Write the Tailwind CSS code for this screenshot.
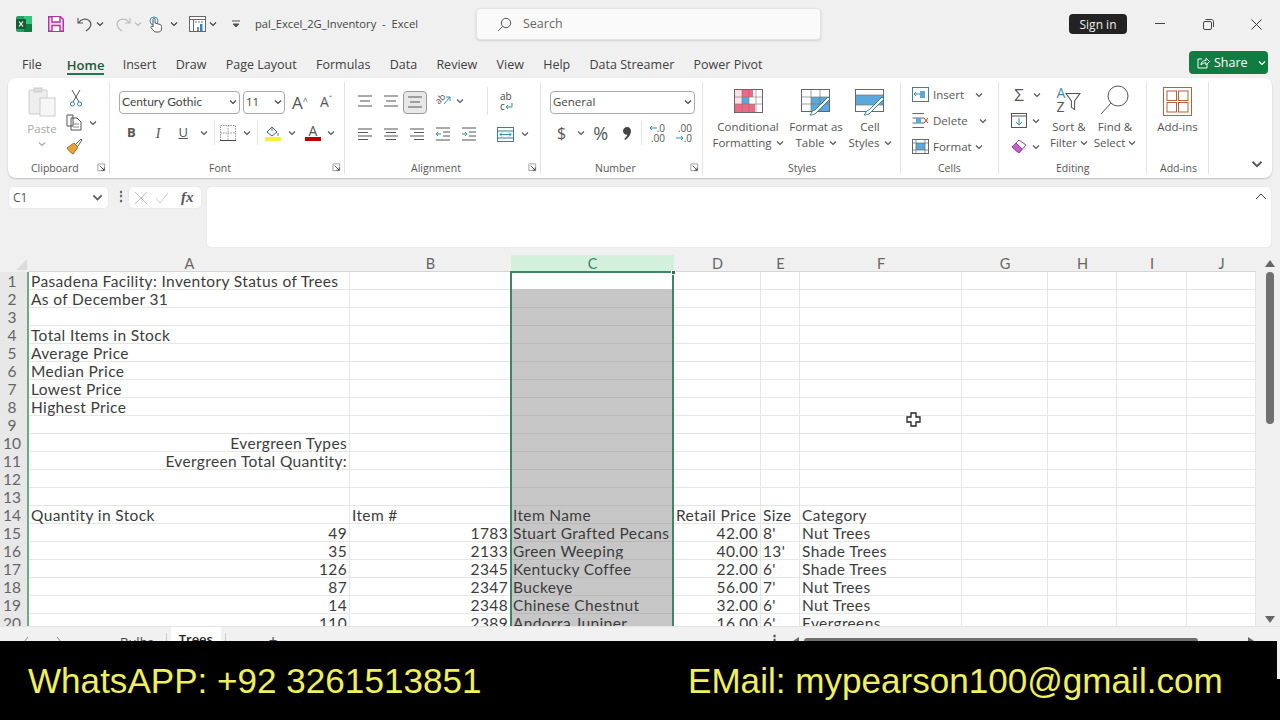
<!DOCTYPE html>
<html lang="en">
  <head>
    <meta charset="UTF-8" />
    <title>pal_Excel_2G_Inventory - Excel</title>
    <script src="https://cdn.jsdelivr.net/npm/@tailwindcss/browser@4"></script>
  </head>
  <body class="bg-[#f0f0f0]">
    <svg class="hidden">
      <symbol id="chev" viewBox="0 0 8 8"><path d="M1 2.5 4 5.5 7 2.5" fill="none" stroke="currentColor" stroke-width="1.2"/></symbol>
      <symbol id="launch" viewBox="0 0 10 10"><path d="M1 1H8.5V8.5H1V1ZM1 1" fill="none" stroke="#999" stroke-width="1"/><path d="M3 3 8 8M8 5V8H5" fill="none" stroke="#444" stroke-width="1"/></symbol>
      <symbol id="lines-center" viewBox="0 0 16 16"><path d="M1 3H15M3 8H13M1 13H15" fill="none" stroke="#555" stroke-width="1.2"/></symbol>
      <symbol id="lines-left" viewBox="0 0 16 16"><path d="M1 3H15M1 6.5H11M1 10H15M1 13.5H11" fill="none" stroke="#555" stroke-width="1.1"/></symbol>
      <symbol id="lines-mid" viewBox="0 0 16 16"><path d="M1 3H15M3 6.5H13M1 10H15M3 13.5H13" fill="none" stroke="#555" stroke-width="1.1"/></symbol>
      <symbol id="lines-right" viewBox="0 0 16 16"><path d="M1 3H15M5 6.5H15M1 10H15M5 13.5H15" fill="none" stroke="#555" stroke-width="1.1"/></symbol>
    </svg>

    <div class="w-[1280px] h-[720px] overflow-hidden flex flex-col text-[#404040] font-['Open_Sans',sans-serif]">
      <!-- title bar -->
      <div class="h-[48px] shrink-0 flex items-center text-[#444]">
        <svg class="ml-[16px] w-[16px] h-[16px]" viewBox="0 0 16 16"><rect width="16" height="16" rx="2" fill="#21a366"/><rect x="8" width="8" height="8" fill="#33c481"/><rect x="8" y="8" width="8" height="8" fill="#107c41"/><rect x="0" y="3" width="10" height="10" rx="1" fill="#185c37"/><path d="M3 5.5 7 10.5M7 5.5 3 10.5" stroke="#fff" stroke-width="1.2"/></svg>
        <svg class="ml-[16px] w-[16px] h-[16px]" viewBox="0 0 16 16"><path d="M.7.7H12.5L15.3 3.5V15.3H.7Z" fill="#f3d6ef" stroke="#b5319f" stroke-width="1.4"/><path d="M4 1V6H12V1M4 15V9.5H12V15" fill="#fff" stroke="#b5319f" stroke-width="1.4"/></svg>
        <svg class="ml-[13px] w-[16px] h-[16px]" viewBox="0 0 16 16"><path d="M1 2V7H6M1.5 7C4 3 9 2 12 4.5 15.5 7.500 14 12 9 15" fill="none" stroke="#555" stroke-width="1.1"/></svg>
        <svg class="ml-[3px] w-[8px] h-[8px]"><use href="#chev"/></svg>
        <svg class="ml-[11px] w-[16px] h-[16px]" viewBox="0 0 16 16"><path d="M15 2V7H10M14.500 7C12 3 7 2 4 4.5 .5 7.500 2 12 7 15" fill="none" stroke="#bbb" stroke-width="1.1"/></svg>
        <svg class="ml-[3px] w-[8px] h-[8px] text-[#bbb]"><use href="#chev"/></svg>
        <svg class="ml-[7px] w-[14px] h-[17px]" viewBox="0 0 14 17"><circle cx="5" cy="5" r="4" fill="none" stroke="#3b8fb0" stroke-width="1"/><path d="M4 11V3.500C4 2 6 2 6 3.500V7L11 8.500C12.500 9 12.500 10 12.500 11.500V13C12.500 15 11 16 9 16H7C5 16 4 14 2 11.500 1.500 10.500 3 9.500 4 11Z" fill="#fff" stroke="#555" stroke-width="1"/></svg>
        <svg class="ml-[7px] w-[8px] h-[8px]"><use href="#chev"/></svg>
        <svg class="ml-[11px] w-[17px] h-[16px]" viewBox="0 0 17 16"><rect x=".5" y=".5" width="16" height="15" fill="#fff" stroke="#666"/><path d="M.5 3.500H16.500M4.500 3.500V15.500" stroke="#666"/><path d="M6 6H15" stroke="#bbb" stroke-width="2" stroke-dasharray="2 1"/><rect x="8" y="11" width="2" height="4" fill="#888"/><rect x="11" y="8" width="2.500" height="7" fill="#2b88c8"/></svg>
        <svg class="ml-[3px] w-[8px] h-[8px]"><use href="#chev"/></svg>
        <svg class="ml-[14px] w-[10px] h-[10px]" viewBox="0 0 10 10"><path d="M1 2H9M2 5 5 8 8 5Z" fill="#555" stroke="#555"/></svg>
        <span class="ml-[14px] w-[165px] pt-[1px] text-[11.2px] whitespace-pre">pal_Excel_2G_Inventory  -  Excel</span>
        <div class="ml-[56px] w-[345px] h-[32px] bg-[#fafafa] rounded border border-[#e2e2e2] shadow-sm flex items-center text-[12.500px] text-[#666]">
          <svg class="ml-[20px] w-[15px] h-[15px]" viewBox="0 0 15 15"><circle cx="9" cy="6" r="4.700" fill="none" stroke="#555"/><path d="M5.500 9.500 1 14" stroke="#555"/></svg>
          <span class="ml-[11px] pt-[1px]">Search</span>
        </div>
        <div class="ml-[248px] w-[58px] h-[20px] bg-[#222] rounded-sm text-[#eee] text-[12px] pt-[1px] flex items-center justify-center">Sign in</div>
        <svg class="ml-[28px] w-[10px] h-[10px]" viewBox="0 0 10 10"><path d="M0 4.500H10" stroke="#444"/></svg>
        <svg class="ml-[38px] w-[11px] h-[11px]" viewBox="0 0 11 11"><rect x=".5" y="2.500" width="8" height="8" rx="1.500" fill="none" stroke="#444"/><path d="M2.500 .5H8.500C9.500 .5 10.500 1.500 10.500 2.500V8" fill="none" stroke="#444"/></svg>
        <svg class="ml-[37px] w-[11px] h-[11px]" viewBox="0 0 11 11"><path d="M.5 .5 10.500 10.500M10.500 .5 .5 10.500" stroke="#333"/></svg>
      </div>

      <!-- ribbon tabs -->
      <div class="h-[30px] shrink-0 flex items-start pl-[22px] text-[12.500px] gap-[19.300px]">
        <span class="mt-[7px] leading-[20px] mr-[5.700px]">File</span>
        <span class="mt-[7px] leading-[20px] text-[13px] font-semibold text-[#185c37] border-b-2 border-[#1e7a4c] h-[20px] -mr-[1px]">Home</span>
        <span class="mt-[7px] leading-[20px]">Insert</span>
        <span class="mt-[7px] leading-[20px]">Draw</span>
        <span class="mt-[7px] leading-[20px]">Page Layout</span>
        <span class="mt-[7px] leading-[20px]">Formulas</span>
        <span class="mt-[7px] leading-[20px]">Data</span>
        <span class="mt-[7px] leading-[20px]">Review</span>
        <span class="mt-[7px] leading-[20px]">View</span>
        <span class="mt-[7px] leading-[20px]">Help</span>
        <span class="mt-[7px] leading-[20px]">Data Streamer</span>
        <span class="mt-[7px] leading-[20px]">Power Pivot</span>
        <div class="ml-auto mr-[12px] mt-[3px] w-[79px] h-[23px] bg-[#107c41] rounded text-white text-[12.500px] flex items-center">
          <svg class="ml-[8px] w-[13px] h-[13px]" viewBox="0 0 13 13"><path d="M5 3H1V12H10V8M4 9C4 6 6 4.500 9 4.500V2L12.500 5.500 9 9V6.800C7 6.800 5.500 7.500 4 9Z" fill="none" stroke="#fff"/></svg>
          <span class="ml-[4px] pt-[1px]">Share</span>
          <svg class="ml-[10px] w-[8px] h-[8px]"><use href="#chev"/></svg>
        </div>
      </div>

      <!-- ribbon -->
      <div class="relative mx-[8px] h-[100px] shrink-0 bg-white rounded-lg shadow-[0_1px_2px_rgba(0,0,0,0.2)] flex text-[11.500px] text-[#555]">
        <!-- clipboard -->
        <div class="relative w-[102px] border-r border-[#e3e3e3] my-[4px]">
          <div class="flex pl-[20px] pt-[5px]">
            <div class="w-[28px] flex flex-col items-center">
              <svg class="w-[28px] h-[30px]" viewBox="0 0 28 30"><rect x="1" y="3" width="18" height="24" rx="1" fill="#eee" stroke="#ccc"/><rect x="6" y="1" width="8" height="4" fill="#ddd" stroke="#ccc"/><rect x="12" y="11" width="15" height="18" fill="#f6f6f6" stroke="#ccc"/></svg>
              <span class="mt-[3px] text-[#aaa]">Paste</span>
              <svg class="mt-[3px] w-[8px] h-[8px] text-[#aaa]"><use href="#chev"/></svg>
            </div>
            <div class="ml-[10px] flex flex-col">
              <svg class="w-[14px] h-[18px] ml-[3px] mt-[2px]" viewBox="0 0 14 18"><path d="M3 1 10 13M11 1 4 13" stroke="#555"/><circle cx="3.500" cy="15" r="2" fill="none" stroke="#2f8fa8"/><circle cx="10.500" cy="15" r="2" fill="none" stroke="#2f8fa8"/></svg>
              <div class="flex items-center mt-[7px]">
                <svg class="w-[17px] h-[17px]" viewBox="0 0 17 17"><path d="M1 1H7V12H1ZM5 4H11L15 8V16H5Z" fill="#fff" stroke="#555"/><path d="M7 10H13M7 13H13" stroke="#888"/></svg>
                <svg class="ml-[6px] w-[8px] h-[8px]"><use href="#chev"/></svg>
              </div>
              <svg class="w-[17px] h-[17px] mt-[7px]" viewBox="0 0 17 17"><path d="M1 10 8 5 12 9 7 16C5 15 3 13 1 10Z" fill="#e8a33d" stroke="#a86b1a"/><path d="M10 6 15 1 16 2 12 8" fill="#fff" stroke="#555"/></svg>
            </div>
          </div>
          <span class="absolute left-[23px] top-[77px] leading-[18px] text-[10.500px]">Clipboard</span>
          <svg class="absolute right-[3px] top-[81px] w-[9px] h-[9px]"><use href="#launch"/></svg>
        </div>
        <!-- font -->
        <div class="relative w-[235px] border-r border-[#e3e3e3] my-[4px] pl-[9px]">
          <div class="flex items-center pt-[9px] h-[31px]">
            <div class="w-[121px] h-[23px] border border-[#aaa] rounded flex items-center pl-[2px] text-[#444]"><span class="font-['Lato',sans-serif] text-[12px]">Century Gothic</span><svg class="ml-auto mr-[2px] w-[8px] h-[8px]"><use href="#chev"/></svg></div>
            <div class="ml-[3px] w-[42px] h-[23px] border border-[#aaa] rounded flex items-center pl-[2px] text-[#444]"><span>11</span><svg class="ml-auto mr-[2px] w-[8px] h-[8px]"><use href="#chev"/></svg></div>
            <span class="ml-[7px] text-[17px] leading-none">A<sup class="text-[9px]">^</sup></span>
            <span class="ml-[12px] text-[14px] leading-none">A<sup class="text-[9px]">ˇ</sup></span>
          </div>
          <div class="flex items-center mt-[9px] h-[22px] text-[13px]">
            <span class="ml-[8px] font-bold">B</span>
            <span class="ml-[20px] italic font-['Liberation_Serif',serif] text-[14px]">I</span>
            <span class="ml-[18px] underline">U</span>
            <svg class="ml-[12px] w-[8px] h-[8px]"><use href="#chev"/></svg>
            <div class="ml-[6px] w-px h-[24px] bg-[#e3e3e3]"></div>
            <svg class="ml-[5px] w-[16px] h-[16px]" viewBox="0 0 16 16"><path d="M.5 .5H15.500V15.500H.5ZM.5 8H15.500M8 .5V15.500" fill="none" stroke="#999" stroke-dasharray="1.500 1"/><path d="M0 15.500H16" stroke="#444"/></svg>
            <svg class="ml-[7px] w-[8px] h-[8px]"><use href="#chev"/></svg>
            <div class="ml-[6px] w-px h-[24px] bg-[#e3e3e3]"></div>
            <div class="ml-[7px] w-[16px] flex flex-col items-center"><svg class="w-[14px] h-[11px]" viewBox="0 0 14 11"><path d="M1 6 6 1 11 6 6 10Z" fill="#fff" stroke="#555"/><path d="M6 1V5M12 7V10" stroke="#2f8fa8"/></svg><div class="w-[16px] h-[4px] bg-[#f5f03a]"></div></div>
            <svg class="ml-[7px] w-[8px] h-[8px]"><use href="#chev"/></svg>
            <div class="ml-[9px] w-[16px] flex flex-col items-center leading-[12px]"><span class="text-[14px]">A</span><div class="w-[16px] h-[4px] bg-[#c00000]"></div></div>
            <svg class="ml-[6px] w-[8px] h-[8px]"><use href="#chev"/></svg>
          </div>
          <span class="absolute left-[99px] top-[77px] leading-[18px] text-[10.500px]">Font</span>
          <svg class="absolute right-[3px] top-[81px] w-[9px] h-[9px]"><use href="#launch"/></svg>
        </div>
        <!-- alignment -->
        <div class="relative w-[196px] border-r border-[#e3e3e3] my-[4px] pl-[12px]">
          <div class="flex items-center pt-[6px] h-[31px]">
            <svg class="w-[16px] h-[16px]"><use href="#lines-center"/></svg>
            <svg class="ml-[10px] w-[16px] h-[16px]"><use href="#lines-center"/></svg>
            <div class="ml-[4px] mt-[3px] w-[24px] h-[23px] bg-[#e8e8e8] border border-[#999] rounded flex items-center justify-center"><svg class="w-[16px] h-[16px]"><use href="#lines-center"/></svg></div>
            <div class="ml-[8px] w-[16px] h-[16px] relative"><span class="absolute left-0 top-0 text-[9px] leading-[12px] -rotate-45">ab</span><svg class="absolute left-0 top-0 w-[16px] h-[16px]" viewBox="0 0 16 16"><path d="M9 11 15 4M11 4H15V8" fill="none" stroke="#2f8fa8"/></svg></div>
            <svg class="ml-[5px] w-[8px] h-[8px]"><use href="#chev"/></svg>
            <div class="ml-[23px] w-px h-[28px] bg-[#e3e3e3]"></div>
            <div class="ml-[12px] flex flex-col text-[10px] leading-[10px] text-[#444]"><span>ab</span><span class="flex items-center">c<svg class="w-[8px] h-[8px]" viewBox="0 0 8 8"><path d="M7 1V5H1M3 3 1 5 3 7" fill="none" stroke="#2f8fa8"/></svg></span></div>
          </div>
          <div class="flex items-center mt-[10px] h-[22px]">
            <svg class="w-[16px] h-[16px]"><use href="#lines-left"/></svg>
            <svg class="ml-[10px] w-[16px] h-[16px]"><use href="#lines-mid"/></svg>
            <svg class="ml-[10px] w-[16px] h-[16px]"><use href="#lines-right"/></svg>
            <svg class="ml-[10px] w-[16px] h-[16px]" viewBox="0 0 16 16"><path d="M1 2H15M8 6H15M8 10H15M1 14H15" stroke="#555"/><path d="M6 8H1M3 6 1 8 3 10" fill="none" stroke="#2f8fa8"/></svg>
            <svg class="ml-[10px] w-[16px] h-[16px]" viewBox="0 0 16 16"><path d="M1 2H15M8 6H15M8 10H15M1 14H15" stroke="#555"/><path d="M1 8H6M4 6 6 8 4 10" fill="none" stroke="#2f8fa8"/></svg>
            <svg class="ml-[20px] w-[17px] h-[15px]" viewBox="0 0 17 15"><rect x=".5" y=".5" width="16" height="14" fill="#fff" stroke="#3b7f90"/><path d="M.5 4H16.500M.5 11H16.500" stroke="#3b7f90"/><path d="M3 7.500H14M5 5.500 3 7.500 5 9.500M12 5.500 14 7.500 12 9.500" fill="none" stroke="#2f8fa8"/></svg>
            <svg class="ml-[7px] w-[8px] h-[8px]"><use href="#chev"/></svg>
          </div>
          <span class="absolute left-[66px] top-[77px] leading-[18px] text-[10.500px]">Alignment</span>
          <svg class="absolute right-[3px] top-[81px] w-[9px] h-[9px]"><use href="#launch"/></svg>
        </div>
        <!-- number -->
        <div class="relative w-[162px] border-r border-[#e3e3e3] my-[4px] pl-[9px]">
          <div class="flex items-center pt-[9px] h-[31px]">
            <div class="w-[145px] h-[23px] border border-[#aaa] rounded flex items-center pl-[2px] text-[#444]"><span>General</span><svg class="ml-auto mr-[2px] w-[8px] h-[8px]"><use href="#chev"/></svg></div>
          </div>
          <div class="flex items-center mt-[9px] h-[22px]">
            <span class="ml-[7px] text-[16px]">$</span>
            <svg class="ml-[11px] w-[8px] h-[8px]"><use href="#chev"/></svg>
            <span class="ml-[8px] text-[18px] leading-none">%</span>
            <svg class="ml-[15px] w-[8px] h-[13px]" viewBox="0 0 8 13"><path d="M4 0C6.500 0 8 1.800 8 4 8 7.500 5.500 11 2 13L1.300 12C3 10.500 4 9.300 4.300 7.800 2 8 0 6.300 0 4 0 1.800 1.800 0 4 0Z" fill="#444"/></svg>
            <div class="ml-[10px] w-px h-[24px] bg-[#e3e3e3]"></div>
            <div class="ml-[5px] w-[18px] text-[10px] leading-[10px] text-right"><div class="flex items-center justify-end"><svg class="w-[8px] h-[6px]" viewBox="0 0 8 6"><path d="M8 3H1M3 1 1 3 3 5" fill="none" stroke="#2f8fa8"/></svg>.0</div><div>.00</div></div>
            <div class="ml-[9px] w-[18px] text-[10px] leading-[10px] text-right"><div>.00</div><div class="flex items-center justify-end"><svg class="w-[8px] h-[6px]" viewBox="0 0 8 6"><path d="M0 3H7M5 1 7 3 5 5" fill="none" stroke="#2f8fa8"/></svg>.0</div></div>
          </div>
          <span class="absolute left-[54px] top-[77px] leading-[18px] text-[10.500px]">Number</span>
          <svg class="absolute right-[3px] top-[81px] w-[9px] h-[9px]"><use href="#launch"/></svg>
        </div>
        <!-- styles -->
        <div class="relative w-[198px] border-r border-[#e3e3e3] my-[4px]">
          <div class="flex pt-[7px]">
            <div class="w-[90px] flex flex-col items-center">
              <svg class="w-[29px] h-[24px]" viewBox="0 0 29 24"><rect x=".5" y=".5" width="28" height="23" fill="#fff" stroke="#666"/><rect x="8" y="1" width="11" height="7" fill="#ee6a84"/><rect x="8" y="8" width="7" height="7" fill="#5aa9dc"/><rect x="1" y="15" width="20" height="8" fill="#ee6a84"/><rect x="1" y="1" width="7" height="14" fill="#ee6a84" opacity=".2"/><path d="M.5 8H28.500M.5 15H28.500M8 .5V23.500M15 .5V23.500M22 .5V23.500" stroke="#777" stroke-width=".6"/></svg>
              <span class="mt-[6px] leading-[16px]">Conditional</span>
              <span class="leading-[16px] flex items-center">Formatting<svg class="ml-[4px] w-[8px] h-[8px]"><use href="#chev"/></svg></span>
            </div>
            <div class="w-[60px] ml-[-7px] flex flex-col items-center">
              <svg class="w-[30px] h-[28px]" viewBox="0 0 30 28"><rect x=".5" y=".5" width="28" height="22" fill="#fff" stroke="#666"/><rect x="10" y="8" width="18" height="14" fill="#5aa9dc"/><path d="M.5 8H28.500M.5 15H28.500M10 .5V22.500M19 .5V22.500" stroke="#777" stroke-width=".7"/><path d="M14 25C12 26 9 26 9 26 11 24 11 21 14 21L27 8 29 10Z" fill="#fff" stroke="#3b7f90"/></svg>
              <span class="mt-[2px] leading-[16px]">Format as</span>
              <span class="leading-[16px] flex items-center">Table<svg class="ml-[4px] w-[8px] h-[8px]"><use href="#chev"/></svg></span>
            </div>
            <div class="w-[46px] ml-[1px] flex flex-col items-center">
              <svg class="w-[30px] h-[28px]" viewBox="0 0 30 28"><rect x=".5" y=".5" width="28" height="22" fill="#fff" stroke="#666"/><rect x="1" y="6" width="27" height="10" fill="#5aa9dc"/><path d="M.5 6H28.500M.5 16H28.500" stroke="#777" stroke-width=".7"/><path d="M14 25C12 26 9 26 9 26 11 24 11 21 14 21L27 8 29 10Z" fill="#fff" stroke="#3b7f90"/></svg>
              <span class="mt-[2px] leading-[16px]">Cell</span>
              <span class="leading-[16px] flex items-center whitespace-nowrap">Styles<svg class="ml-[4px] w-[8px] h-[8px]"><use href="#chev"/></svg></span>
            </div>
          </div>
          <span class="absolute left-[85px] top-[77px] leading-[18px] text-[10.500px]">Styles</span>
        </div>
        <!-- cells -->
        <div class="relative w-[98px] border-r border-[#e3e3e3] my-[4px] pl-[11px]">
          <div class="flex items-center h-[17px] mt-[4px]">
            <svg class="w-[17px] h-[15px]" viewBox="0 0 17 15"><rect x=".5" y=".5" width="16" height="14" fill="#fff" stroke="#3b7f90"/><rect x="8" y="4" width="5" height="7" fill="#5aa9dc"/><path d="M8 7H2M4 5 2 7 4 9" fill="none" stroke="#2f8fa8"/></svg>
            <span class="ml-[4px]">Insert</span><svg class="ml-[11px] w-[8px] h-[8px]"><use href="#chev"/></svg>
          </div>
          <div class="flex items-center h-[17px] mt-[9px]">
            <svg class="w-[17px] h-[15px]" viewBox="0 0 17 15"><path d="M.5 .5H12M.5 14.500H12M.5 5H12M.5 10H12" stroke="#666"/><rect x="4" y="5" width="5" height="5" fill="#5aa9dc"/><path d="M12 5 16 10M16 5 12 10" stroke="#d22"/></svg>
            <span class="ml-[4px]">Delete</span><svg class="ml-[11px] w-[8px] h-[8px]"><use href="#chev"/></svg>
          </div>
          <div class="flex items-center h-[17px] mt-[9px]">
            <svg class="w-[17px] h-[15px]" viewBox="0 0 17 15"><rect x=".5" y=".5" width="16" height="14" fill="#fff" stroke="#666"/><rect x="4" y="4" width="9" height="7" fill="#5aa9dc"/><path d="M4 .5V14.500M13 .5V14.500M.5 4H16.500M.5 11H16.500" stroke="#666" stroke-width=".7"/></svg>
            <span class="ml-[4px]">Format</span><svg class="ml-[3px] w-[8px] h-[8px]"><use href="#chev"/></svg>
          </div>
          <span class="absolute left-[37px] top-[77px] leading-[18px] text-[10.500px]">Cells</span>
        </div>
        <!-- editing -->
        <div class="relative w-[148px] border-r border-[#e3e3e3] my-[4px] flex">
          <div class="ml-[12px] w-[34px] flex flex-col">
            <div class="flex items-center h-[17px] mt-[4px]"><span class="w-[16px] text-center text-[17px] leading-none">Σ</span><svg class="ml-[6px] w-[8px] h-[8px]"><use href="#chev"/></svg></div>
            <div class="flex items-center h-[17px] mt-[9px]"><svg class="w-[16px] h-[15px]" viewBox="0 0 16 15"><rect x=".5" y=".5" width="15" height="14" fill="#fff" stroke="#555"/><path d="M.5 3H15.500" stroke="#555"/><path d="M8 5V12M5 9 8 12 11 9" fill="none" stroke="#2f8fa8"/></svg><svg class="ml-[5px] w-[8px] h-[8px]"><use href="#chev"/></svg></div>
            <div class="flex items-center h-[17px] mt-[9px]"><svg class="w-[16px] h-[15px]" viewBox="0 0 16 15"><path d="M1 8 8 1 15 6 8 14Z" fill="#fff" stroke="#9a3f9a"/><path d="M1 8 5 4 11 10 8 14Z" fill="#c95fc9" stroke="#9a3f9a"/></svg><svg class="ml-[5px] w-[8px] h-[8px]"><use href="#chev"/></svg></div>
          </div>
          <div class="ml-[-1px] w-[50px] flex flex-col items-center pt-[3px]">
            <div class="h-[29px] flex items-end"><div class="flex flex-col text-[14px] leading-[14px]"><span class="text-[#3b8fa8]">A</span><span>Z</span></div><svg class="w-[16px] h-[20px] mb-[2px]" viewBox="0 0 15 18"><path d="M1 1H14L9 8V16L6 14V8Z" fill="#fff" stroke="#555"/></svg></div>
            <span class="mt-[5px] leading-[16px]">Sort &amp;</span>
            <span class="leading-[16px] flex items-center">Filter<svg class="ml-[3px] w-[8px] h-[8px]"><use href="#chev"/></svg></span>
          </div>
          <div class="ml-[-3px] w-[48px] flex flex-col items-center pt-[3px]">
            <svg class="w-[30px] h-[30px]" viewBox="0 0 30 30"><circle cx="18" cy="11" r="10" fill="#fff" stroke="#555"/><path d="M11 18 1 29" stroke="#555"/></svg>
            <span class="mt-[4px] leading-[16px]">Find &amp;</span>
            <span class="leading-[16px] flex items-center">Select<svg class="ml-[3px] w-[8px] h-[8px]"><use href="#chev"/></svg></span>
          </div>
          <span class="absolute left-[57px] top-[77px] leading-[18px] text-[10.500px]">Editing</span>
        </div>
        <!-- add-ins -->
        <div class="relative w-[62px] border-r border-[#e3e3e3] my-[4px] flex flex-col items-center pt-[5px]">
          <svg class="w-[29px] h-[29px]" viewBox="0 0 29 29"><rect x=".5" y=".5" width="28" height="28" fill="#fff" stroke="#b5613c"/><rect x="4" y="4" width="9.500" height="9.500" fill="none" stroke="#b5613c"/><rect x="15.500" y="4" width="9.500" height="9.500" fill="none" stroke="#b5613c"/><rect x="4" y="15.500" width="9.500" height="9.500" fill="none" stroke="#b5613c"/><rect x="15.500" y="15.500" width="9.500" height="9.500" fill="none" stroke="#b5613c"/></svg>
          <span class="mt-[3px] leading-[16px]">Add-ins</span>
          <span class="absolute left-[13px] top-[77px] leading-[18px] text-[10.500px]">Add-ins</span>
        </div>
        <svg class="absolute right-[9px] top-[80px] w-[12px] h-[12px]"><use href="#chev"/></svg>
      </div>

      <!-- formula bar -->
      <div class="h-[61px] shrink-0 mt-[9px] flex items-start text-[12px] text-[#555]">
        <div class="ml-[9px] w-[99px] h-[21px] bg-white rounded shadow-[0_0_1px_rgba(0,0,0,0.2)] flex items-center pl-[4px]"><span>C1</span><svg class="ml-auto mr-[5px] w-[11px] h-[11px]"><use href="#chev"/></svg></div>
        <span class="ml-[7px] w-[4px] leading-[18px] font-bold">⋮</span>
        <div class="ml-[10px] w-[72px] h-[21px] bg-white rounded shadow-[0_0_1px_rgba(0,0,0,0.2)] flex items-center pl-[6px]">
          <svg class="w-[12px] h-[12px]" viewBox="0 0 12 12"><path d="M0 0 12 12M12 0 0 12" stroke="#bbb"/></svg>
          <svg class="ml-[8px] w-[14px] h-[12px]" viewBox="0 0 14 12"><path d="M1 6 5 11 13 1" fill="none" stroke="#ccc"/></svg>
          <span class="ml-[12px] font-['Liberation_Serif',serif] italic font-bold text-[15px] leading-none">fx</span>
        </div>
        <div class="relative ml-[6px] w-[1064px] h-[60px] bg-white rounded shadow-[0_0_1px_rgba(0,0,0,0.2)]">
          <svg class="absolute right-[4px] top-[4px] w-[12px] h-[12px]" viewBox="0 0 12 12"><path d="M1 8 6 3 11 8" fill="none" stroke="#444"/></svg>
        </div>
      </div>

      <!-- sheet -->
      <div class="h-[371px] shrink-0 mt-[7px] relative overflow-hidden flex font-['Lato',sans-serif]">
        <div class="w-[1258px] h-[371px] overflow-hidden">
          <div id="sheet" class="grid grid-cols-[29px_321px_161px_163px_87px_39px_162px_86px_69px_70px_69px] grid-rows-[17px] auto-rows-[18px] text-[15.500px] tracking-[0.36px] text-[#3c3c3c]"></div>
        </div>
        <div class="w-[22px] flex flex-col items-center pl-[2px]">
          <svg class="mt-[5px] w-[10px] h-[7px]" viewBox="0 0 10 7"><path d="M5 0 10 7H0Z" fill="#666"/></svg>
          <div class="mt-[5px] w-[8px] h-[152px] bg-[#707070] rounded-full"></div>
          <svg class="mt-auto mb-[3px] w-[10px] h-[7px]" viewBox="0 0 10 7"><path d="M5 7 10 0H0Z" fill="#666"/></svg>
        </div>
        <!-- selected column outline and mouse pointer -->
        <div class="absolute left-[510px] top-[16px] w-[164px] h-[360px] border-2 border-[#3f8465] border-b-0"></div>
        <div class="absolute left-[671px] top-[15px] w-[5px] h-[5px] bg-[#2f6f52] border border-white"></div>
        <svg class="absolute left-[906px] top-[157px] w-[15px] h-[15px]" viewBox="0 0 15 15"><path d="M5 1H10V5H14V10H10V14H5V10H1V5H5Z" fill="#fff" stroke="#222" stroke-width="1.300"/></svg>
      </div>

      <!-- sheet tabs, cut off by the banner -->
      <div class="h-[15px] shrink-0 overflow-hidden bg-[#f1f1f1] text-[13px] text-[#444] border-t border-[#e2e2e2] flex">
        <div class="w-[768px] shrink-0 flex">
          <svg class="ml-[23px] mt-[9px] w-[6px] h-[12px]" viewBox="0 0 6 12"><path d="M5 1 1 6 5 11" fill="none" stroke="#888"/></svg>
          <svg class="ml-[27px] mt-[9px] w-[6px] h-[12px]" viewBox="0 0 6 12"><path d="M1 1 5 6 1 11" fill="none" stroke="#888"/></svg>
          <span class="ml-[58px] mt-[5px] leading-[20px]">Bulbs</span>
          <div class="ml-[12px] w-px bg-[#ccc] mt-[6px]"></div>
          <div class="ml-[4px] w-[50px] bg-white text-center font-semibold text-[#222] leading-[20px] pt-[2px]">Trees</div>
          <div class="ml-[4px] w-px bg-[#ccc] mt-[6px]"></div>
          <span class="ml-[43px] mt-[3px] leading-[20px] text-[15px]">+</span>
        </div>
        <span class="w-[6px] mt-[2px] leading-[20px] font-bold">⋮</span>
        <svg class="ml-[19px] mt-[10px] w-[6px] h-[8px]" viewBox="0 0 6 8"><path d="M0 4 6 0V8Z" fill="#666"/></svg>
        <div class="ml-[5px] mt-[11px] w-[394px] h-[6px] bg-[#707070] rounded-full"></div>
        <svg class="ml-[50px] mt-[10px] w-[6px] h-[8px]" viewBox="0 0 6 8"><path d="M6 4 0 0V8Z" fill="#666"/></svg>
      </div>

      <!-- banner -->
      <div class="relative flex-1 bg-black flex items-center text-[35.100px] leading-none text-[#f0f05e] font-['Liberation_Sans',sans-serif]">
        <span class="ml-[28px] w-[660px]">WhatsAPP: +92 3261513851</span>
        <span>EMail: mypearson100@gmail.com</span>
        <div class="absolute right-0 top-0 w-[3px] h-[38px] bg-[#f0f0f0]"></div>
      </div>
    </div>

    <script>
      const letters = ["A", "B", "C", "D", "E", "F", "G", "H", "I", "J"];
      // row number -> cells for columns A to F, text starting with > is right aligned
      const data = {
        1: ["Pasadena Facility: Inventory Status of Trees"],
        2: ["As of December 31"],
        4: ["Total Items in Stock"],
        5: ["Average Price"],
        6: ["Median Price"],
        7: ["Lowest Price"],
        8: ["Highest Price"],
        10: [">Evergreen Types"],
        11: [">Evergreen Total Quantity:"],
        14: ["Quantity in Stock", "Item #", "Item Name", "Retail Price", "Size", "Category"],
        15: [">49", ">1783", "Stuart Grafted Pecans", ">42.00", "8'", "Nut Trees"],
        16: [">35", ">2133", "Green Weeping", ">40.00", "13'", "Shade Trees"],
        17: [">126", ">2345", "Kentucky Coffee", ">22.00", "6'", "Shade Trees"],
        18: [">87", ">2347", "Buckeye", ">56.00", "7'", "Nut Trees"],
        19: [">14", ">2348", "Chinese Chestnut", ">32.00", "6'", "Nut Trees"],
        20: [">110", ">2389", "Andorra Juniper", ">16.00", "6'", "Evergreens"],
      };

      let html = `<div class="bg-[#f0f0f0] relative"><svg class="absolute right-[2px] bottom-[2px] w-[11px] h-[11px]" viewBox="0 0 11 11"><path d="M11 0V11H0Z" fill="#dcdcdc"/></svg></div>`;
      letters.forEach((l) => {
        if (l === "C") {
          html += `<div class="bg-[#d3f0dd] text-[#3f8465] text-center text-[14.500px] tracking-normal leading-[17px]">${l}</div>`;
        } else {
          html += `<div class="bg-[#f0f0f0] text-[#666] text-center border-b border-[#d4d4d4] text-[14.500px] tracking-normal leading-[17px]">${l}</div>`;
        }
      });

      for (let r = 1; r <= 20; r++) {
        const row = data[r] || [];
        html += `<div class="bg-[#e8e8e8] text-[#666] text-center pr-[3px] border-r-2 border-[#6fa88c] leading-[18px] tracking-normal">${r}</div>`;
        letters.forEach((_, i) => {
          const val = row[i] || "";
          const right = val.startsWith(">");
          const text = right ? val.slice(1) : val;
          if (i === 2) {
            const bg = r === 1 ? "bg-white border-[#c7c7c7]" : "bg-[#c7c7c7] border-[#b9b9b9]";
            html += `<div class="${bg} pl-[2px] border-b leading-[18px] whitespace-nowrap overflow-hidden">${text}</div>`;
          } else if (right) {
            html += `<div class="bg-white border-r border-b border-[#e6e6e6] pr-[2px] text-right leading-[18px] whitespace-nowrap">${text}</div>`;
          } else {
            html += `<div class="bg-white border-r border-b border-[#e6e6e6] pl-[2px] leading-[18px] whitespace-nowrap">${text}</div>`;
          }
        });
      }
      document.getElementById("sheet").innerHTML = html;
    </script>
  </body>
</html>
